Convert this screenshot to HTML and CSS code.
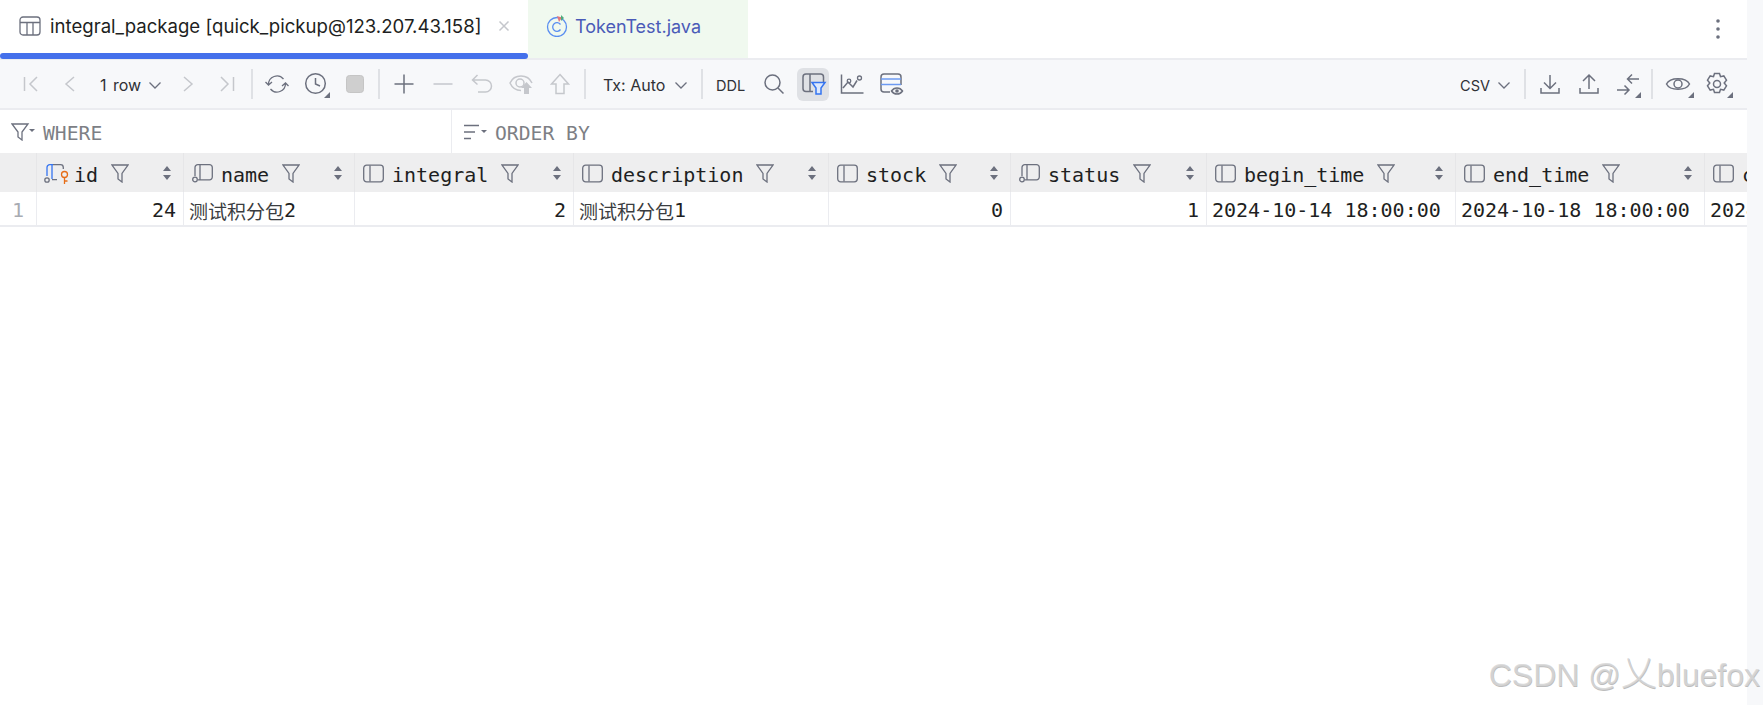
FILE: index.html
```html
<!DOCTYPE html>
<html lang="en">
<head>
<meta charset="utf-8">
<title>integral_package</title>
<link rel="stylesheet" href="styles.css">
</head>
<body>
<svg class="defs" width="0" height="0" aria-hidden="true">
  <symbol id="col" viewBox="0 0 21 18"><rect class="ln" x="0.7" y="0.7" width="19.6" height="16.6" rx="3"/><path class="ln" d="M7 1v16"/></symbol>
  <symbol id="colfk" viewBox="0 0 21 19"><path class="ln" d="M3 12V3.500a2.800 2.800 0 0 1 2.800-2.800H17.500a2.800 2.800 0 0 1 2.800 2.800v9.500a2.800 2.800 0 0 1-2.800 2.800H6M8 1v14.500"/><circle class="ln" cx="3" cy="15.500" r="2.300"/></symbol>
  <symbol id="funnel" viewBox="0 0 18 19"><path class="ln" d="M1 1h16l-6 8.500V18l-4-3V9.500z"/></symbol>
  <symbol id="sort" viewBox="0 0 8 14"><path class="fl" d="M4 0l4 5H0zM4 14l4-5H0z"/></symbol>
</svg>
<div class="page">
  <main class="main">
    <div class="tabs">
      <div class="tab tab-active">
        <svg class="tab-icon" width="22" height="20" viewBox="0 0 22 20"><rect class="ln" x="1" y="1" width="20" height="18" rx="3"/><path class="ln" d="M1 6.500h20M8 6.500V19M14 6.500V19"/></svg>
        <span class="tab-title">integral_package [quick_pickup@123.207.43.158]</span>
        <svg class="tab-close" width="12" height="12" viewBox="0 0 12 12"><path class="off" d="M1.500 1.500l9 9M10.500 1.500l-9 9"/></svg>
      </div>
      <div class="tab tab-java">
        <svg class="java-icon" width="22" height="22" viewBox="0 0 22 22"><circle class="blue" cx="11" cy="12" r="9.500"/><path class="blue" d="M14.500 9.500a4.300 4.300 0 1 0 0 5"/><path class="red" d="M11 1l5 1.500-3 4.500z"/><path class="green" d="M15 0l3 3-3 3z"/></svg>
        <span class="java-title">TokenTest.java</span>
      </div>
      <svg class="kebab" width="4" height="20" viewBox="0 0 4 20"><circle class="fl" cx="2" cy="2" r="1.800"/><circle class="fl" cx="2" cy="10" r="1.800"/><circle class="fl" cx="2" cy="18" r="1.800"/></svg>
    </div>

    <div class="toolbar">
      <span class="btn"><svg class="i" viewBox="0 0 24 24"><path class="off" d="M5.500 5v14M18 5l-7 7 7 7"/></svg></span>
      <span class="btn"><svg class="i" viewBox="0 0 24 24"><path class="off" d="M16 5l-8 7 8 7"/></svg></span>
      <span class="combo combo-rows">1 row<svg class="chev" viewBox="0 0 14 14"><path class="ln" d="M1.500 4.500l5.500 5.500 5.500-5.500"/></svg></span>
      <span class="btn"><svg class="i" viewBox="0 0 24 24"><path class="off" d="M8 5l8 7-8 7"/></svg></span>
      <span class="btn"><svg class="i" viewBox="0 0 24 24"><path class="off" d="M18.500 5v14M6 5l7 7-7 7"/></svg></span>
      <span class="sep"></span>
      <span class="btn"><svg class="i" viewBox="0 0 24 24"><path class="ln" d="M3.500 12.500a8.500 8.500 0 0 1 15-5.500M20.500 11.500a8.500 8.500 0 0 1-15 5.500M0.500 10l3 3 3.500-3M17 14l3.500-3 3 3"/></svg></span>
      <span class="btn"><svg class="i" viewBox="0 0 24 24"><circle class="ln2" cx="11.500" cy="11.500" r="9.800"/><path class="ln2" d="M11.500 6v6l4.500 2"/><path class="fl" d="M26 20v6h-6z"/></svg></span>
      <span class="btn"><svg class="i" viewBox="0 0 24 24"><rect class="stop" x="3.500" y="3.500" width="17" height="17" rx="3"/></svg></span>
      <span class="sep sep-b"></span>
      <span class="btn"><svg class="i" viewBox="0 0 24 24"><path class="ln2" d="M2.500 12h19M12 2.500v19"/></svg></span>
      <span class="btn"><svg class="i" viewBox="0 0 24 24"><path class="off" d="M2.500 12h19"/></svg></span>
      <span class="btn"><svg class="i" viewBox="0 0 24 24"><path class="off" d="M7.500 3L2.500 8l5 4.500M2.500 8H15.500a5.800 5.800 0 0 1 0 12H8"/></svg></span>
      <span class="btn"><svg class="i" viewBox="0 0 24 24"><path class="off" d="M12 18.500C7 18.500 3 15.500 1 11 3 6.500 7 4 12 4s9 2.500 11 7"/><circle class="off" cx="11" cy="11" r="4"/><path class="ofl" d="M17.500 10l5.500 6h-3v6h-5v-6h-3z"/></svg></span>
      <span class="btn"><svg class="i" viewBox="0 0 24 24"><path class="off" d="M12 2.500l8.500 9.500H16v9.500H8V12H3.500z"/></svg></span>
      <span class="sep"></span>
      <span class="combo combo-tx">Tx: Auto<svg class="chev" viewBox="0 0 14 14"><path class="ln" d="M1.500 4.500l5.500 5.500 5.500-5.500"/></svg></span>
      <span class="sep sep-flush"></span>
      <span class="combo combo-ddl">DDL</span>
      <span class="btn"><svg class="i" viewBox="0 0 24 24"><circle class="ln2" cx="10.500" cy="10.500" r="7.500"/><path class="ln2" d="M16 16l5.500 5.500"/></svg></span>
      <span class="btn"><span class="on"><svg class="i" viewBox="0 0 24 24"><path class="ln2" d="M12 19.500H5a3 3 0 0 1-3-3V5a3 3 0 0 1 3-3h14.500a3 3 0 0 1 3 3v5M9 2v17.500"/><path class="bluefill" d="M11 10.500h13L20 16v6h-5v-6z"/></svg></span></span>
      <span class="btn"><svg class="i" viewBox="0 0 24 24"><path class="ln2" d="M1.500 2.500V21h22M3 16l5-6 5 5 4-6.500"/><circle class="ln" cx="9" cy="9" r="1.800"/><circle class="ln" cx="19.500" cy="6" r="2"/></svg></span>
      <span class="btn"><svg class="i" viewBox="0 0 24 24"><path class="ln2" d="M11 20H5a3 3 0 0 1-3-3V5a3 3 0 0 1 3-3h14a3 3 0 0 1 3 3v8"/><path class="blue2" d="M2 7h20M2 12.500h20"/><path class="ln2" d="M12.500 19c2.600-4 8.400-4 11 0-2.600 4-8.400 4-11 0z"/><circle class="fl" cx="18" cy="19" r="1.800"/></svg></span>

      <span class="toolbar-right">
        <span class="combo combo-csv">CSV<svg class="chev" viewBox="0 0 14 14"><path class="ln" d="M1.500 4.500l5.500 5.500 5.500-5.500"/></svg></span>
        <span class="sep sep-c"></span>
        <span class="btn"><svg class="i" viewBox="0 0 24 24"><path class="ln2" d="M12 3v13M6 10.500l6 6 6-6M3 16v5h18v-5"/></svg></span>
        <span class="btn"><svg class="i" viewBox="0 0 24 24"><path class="ln2" d="M12 17V3.500M6 9l6-6 6 6M3 16v5h18v-5"/></svg></span>
        <span class="btn"><svg class="i" viewBox="0 0 24 24"><path class="ln2" d="M23 7H11.500M16 2.500L11.500 7l4.500 4.500M1 18h12M8.500 13.500L13 18l-4.500 4.500"/><path class="fl" d="M25 20v6h-6z"/></svg></span>
        <span class="sep sep-d"></span>
        <span class="btn"><svg class="i" viewBox="0 0 24 24"><path class="ln2" d="M0.500 12C4 5 20 5 23.500 12 20 19 4 19 0.500 12z"/><circle class="ln2" cx="12" cy="12" r="4"/><path class="fl" d="M28 20v6h-6z"/></svg></span>
        <span class="btn"><svg class="i" viewBox="0 0 24 24"><path class="ln2" d="M9.500 1.500h5l1 3.200 3.300-.8 2.700 4.300-2.300 2.800 2.300 2.800-2.700 4.300-3.300-.8-1 3.200h-5l-1-3.200-3.300.8-2.700-4.300 2.300-2.800-2.300-2.800 2.700-4.300 3.300.8z"/><circle class="ln2" cx="12" cy="12" r="3.500"/><path class="fl" d="M28 20v6h-6z"/></svg></span>
      </span>
    </div>

    <div class="filters">
      <div class="filter filter-where">
        <svg class="f-icon" width="24" height="18" viewBox="0 0 24 18"><path class="ln" d="M1 1h16l-6 8v8l-4-3V9z"/><path class="fl" d="M18 6h6l-3 3z"/></svg>
        <span>WHERE</span>
      </div>
      <div class="filter filter-order">
        <svg class="f-icon" width="24" height="18" viewBox="0 0 24 18"><path class="ln" d="M1 2.500h15M1 9h11M1 15.500h7"/><path class="fl" d="M18 7h6l-3 3z"/></svg>
        <span>ORDER BY</span>
      </div>
    </div>

    <div class="grid grid-head">
      <div class="th th-gutter"></div>
      <div class="th th-id">
        <svg class="col-pk" width="24" height="20" viewBox="0 0 24 20"><path class="bluefine" d="M2 12V3.500A2.800 2.800 0 0 1 4.800.7H8M7 1v14"/><path class="ln" d="M8 .7h7.500a2.800 2.800 0 0 1 2.800 2.800V5M7 15.700h5"/><circle class="ln" cx="2" cy="16" r="2.200"/><circle class="orange" cx="19.500" cy="10.500" r="3"/><path class="orange" d="M19.500 13.500V20M19.500 17h3"/></svg>
        <span class="cn">id</span><svg class="fn"><use href="#funnel"/></svg><svg class="so"><use href="#sort"/></svg>
      </div>
      <div class="th"><svg class="ci"><use href="#colfk"/></svg><span class="cn">name</span><svg class="fn"><use href="#funnel"/></svg><svg class="so"><use href="#sort"/></svg></div>
      <div class="th"><svg class="ci"><use href="#col"/></svg><span class="cn">integral</span><svg class="fn"><use href="#funnel"/></svg><svg class="so"><use href="#sort"/></svg></div>
      <div class="th"><svg class="ci"><use href="#col"/></svg><span class="cn">description</span><svg class="fn"><use href="#funnel"/></svg><svg class="so"><use href="#sort"/></svg></div>
      <div class="th"><svg class="ci"><use href="#col"/></svg><span class="cn">stock</span><svg class="fn"><use href="#funnel"/></svg><svg class="so"><use href="#sort"/></svg></div>
      <div class="th"><svg class="ci"><use href="#colfk"/></svg><span class="cn">status</span><svg class="fn"><use href="#funnel"/></svg><svg class="so"><use href="#sort"/></svg></div>
      <div class="th"><svg class="ci"><use href="#col"/></svg><span class="cn">begin_time</span><svg class="fn"><use href="#funnel"/></svg><svg class="so"><use href="#sort"/></svg></div>
      <div class="th"><svg class="ci"><use href="#col"/></svg><span class="cn">end_time</span><svg class="fn"><use href="#funnel"/></svg><svg class="so"><use href="#sort"/></svg></div>
      <div class="th th-last"><svg class="ci"><use href="#col"/></svg><span class="cn">create_time</span></div>
    </div>
    <div class="grid grid-row">
      <div class="td td-gutter">1</div>
      <div class="td td-num">24</div>
      <div class="td"><span class="cjk">测试积分包</span>2</div>
      <div class="td td-num">2</div>
      <div class="td"><span class="cjk">测试积分包</span>1</div>
      <div class="td td-num">0</div>
      <div class="td td-num">1</div>
      <div class="td">2024-10-14 18:00:00</div>
      <div class="td">2024-10-18 18:00:00</div>
      <div class="td td-last">2024-10-14 18:00:00</div>
    </div>
  </main>
  <aside class="strip"></aside>
</div>
<div class="watermark">CSDN @<span class="wm-cjk">乂</span>bluefox</div>
</body>
</html>
```
FILE: styles.css
```css
* { box-sizing: border-box; }
html, body { margin: 0; height: 100%; background: #fff; overflow: hidden; }
body { font-family: Inter, "Noto Sans", sans-serif; color: #1e1f22; position: relative; }
.defs { position: absolute; }

.page { display: flex; height: 705px; }
.main { flex: 1; min-width: 0; display: flex; flex-direction: column; }
.strip { width: 16px; background: #f7f8fa; }

/* shared svg paint */
.ln, .ln2, .off, .blue, .blue2, .bluefine, .orange, .stop, .bluefill { fill: none; }
.ln { stroke: #6c707e; stroke-width: 1.3; }
.ln2 { stroke: #6c707e; stroke-width: 1.5; }
.off { stroke: #c5c7cc; stroke-width: 1.5; }
.ofl { fill: #c5c7cc; }
.fl { fill: #6c707e; }
.blue { stroke: #5a8ef0; stroke-width: 1.3; }
.blue2 { stroke: #6d9af2; stroke-width: 1.3; }
.bluefine { stroke: #3574f0; stroke-width: 1.3; }
.orange { stroke: #e66d17; stroke-width: 1.3; }
.red { fill: #e5767a; }
.green { fill: #4dab7e; }
.stop { fill: #cfcfcf; stroke: #c5c5c5; }
.bluefill { fill: #dce8fd; stroke: #3574f0; stroke-width: 1.5; }

/* tabs */
.tabs { display: flex; align-items: stretch; height: 60px; border-bottom: 2px solid #ebecf0; position: relative; }
.tab { display: flex; align-items: center; height: 58px; font-size: 18.600px; }
.tab-active { width: 528px; padding: 0 0 6px 19px; position: relative; }
.tab-active::after { content: ""; position: absolute; left: 0; right: 0; bottom: -1px; height: 6px; border-radius: 3px; background: #4470eb; }
.tab-icon { margin-right: 9px; flex: none; }
.tab-title { white-space: nowrap; width: 431px; flex: none; }
.tab-close { margin-left: 17px; flex: none; }
.tab-java { width: 220px; background: #f0f9ef; padding: 0 0 6px 18px; font-size: 18px; }
.java-icon { flex: none; margin-right: 7px; }
.java-title { color: #4a5bb8; }
.kebab { margin: 19px 0 0 auto; margin-right: 27px; }

/* toolbar */
.toolbar { display: flex; align-items: center; height: 50px; padding: 0 11px; background: #f7f8fa; border-bottom: 2px solid #ebecf0; font-size: 16px; color: #2f3136; }
.btn { width: 39px; height: 48px; flex: none; display: flex; align-items: center; justify-content: center; }
.i { width: 24px; height: 24px; overflow: visible; display: block; }
.on { width: 32px; height: 33px; border-radius: 6px; background: #dfe1e5; display: flex; align-items: center; justify-content: center; }
.sep { width: 2px; height: 30px; background: #dfe1e5; flex: none; margin: 0 4px 0 5px; }
.sep-b { margin: 0 4px; }
.sep-flush { margin: 0; }
.sep-c { margin: 0 4px 0 13px; }
.sep-d { margin: 0 5px 0 4px; }
.combo { display: flex; align-items: center; flex: none; white-space: nowrap; padding-top: 2px; }
.chev { width: 14px; height: 14px; flex: none; }
.combo-rows { width: 79px; padding-left: 11px; word-spacing: 2px; }
.combo-rows .chev { margin-left: 7px; }
.combo-tx { width: 111px; padding-left: 13px; }
.combo-tx .chev { margin-left: 9px; }
.combo-ddl { width: 51px; padding-left: 13px; font-size: 14.500px; }
.combo-csv { font-size: 14.500px; }
.combo-csv .chev { margin-left: 7px; }
.toolbar-right { margin-left: auto; display: flex; align-items: center; }

/* filter row */
.filters { display: flex; height: 43px; font-family: "DejaVu Sans Mono", monospace; font-size: 19.700px; color: #7d7f85; }
.filter { display: flex; align-items: center; padding-top: 3px; }
.filter-where { width: 452px; padding-left: 11px; border-right: 1px solid #ebecf0; }
.filter-order { padding-left: 11px; }
.f-icon { margin-right: 8px; margin-top: -3px; flex: none; }

/* grid */
.grid { display: grid; grid-template-columns: 37px 147px 171px 219px 255px 182px 196px 249px 249px 42px; font-family: "DejaVu Sans Mono", monospace; font-size: 20px; color: #1e1f22; }
.grid-head { height: 39px; background: #eeeeef; }
.grid-row { height: 35px; border-bottom: 2px solid #ebecf0; }
.th { display: flex; align-items: center; padding: 4px 12px 0 8px; border-right: 1px solid #e6e6e8; min-width: 0; overflow: hidden; }
.th-gutter { padding: 0; }
.th-last { border-right: 0; }
.ci { width: 21px; height: 19px; flex: none; margin-right: 8px; margin-top: -2px; }
.col-pk { flex: none; margin-right: 5px; margin-top: -2px; overflow: visible; }
.cn { white-space: nowrap; flex: none; }
.fn { width: 18px; height: 19px; flex: none; margin-left: 13px; margin-top: -3px; }
.so { width: 8px; height: 14px; flex: none; margin-left: auto; margin-top: -3px; }
.td { display: flex; align-items: center; padding: 3px 7px 0 5px; border-right: 1px solid #ebecf0; white-space: nowrap; overflow: hidden; min-width: 0; }
.td-num { justify-content: flex-end; }
.td-gutter { justify-content: center; color: #a8abb2; padding: 3px 0 0 0; }
.td-last { border-right: 0; }
.cjk { font-family: "Noto Sans CJK SC", sans-serif; font-size: 19px; color: #3a3c40; }

/* watermark */
.watermark { position: absolute; right: 3px; bottom: 12px; white-space: nowrap; font-family: "Liberation Sans", sans-serif; font-size: 32px; line-height: 36px; color: rgba(214, 214, 214, 0.85); text-shadow: 0.5px 0.5px 0.5px #bdbdbd; }
.wm-cjk { font-family: "Noto Sans CJK SC", sans-serif; font-weight: 300; font-size: 36px; }
```
